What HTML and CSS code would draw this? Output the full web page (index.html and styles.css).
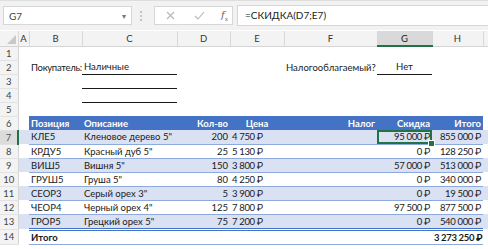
FILE: index.html
```html
<!DOCTYPE html>
<html lang="ru">
<head>
    <meta charset="UTF-8">
    <title>Скидка</title>
    <link rel="stylesheet" href="styles.css">
</head>
<body>
    <!-- Formula bar -->
    <div class="formula-bar">
        <div class="name-box">G7<span class="name-arrow">&#9662;</span></div>
        <div class="grip"></div>
        <div class="fx-buttons">
            <svg width="9" height="9" viewBox="0 0 9 9"><path d="M1 1L8 8M8 1L1 8" stroke="#b5b5b5" stroke-width="1.1" fill="none"/></svg>
            <svg width="11" height="9" viewBox="0 0 11 9"><path d="M1 5L4 8L10 1" stroke="#b5b5b5" stroke-width="1.1" fill="none"/></svg>
            <span class="fx">f<sub>x</sub></span>
        </div>
        <div class="formula-input">=СКИДКА(D7;E7)</div>
    </div>

    <!-- Sheet -->
    <table class="sheet">
        <colgroup>
            <col class="c-hdr"><col class="c-a"><col class="c-b"><col class="c-c"><col class="c-d">
            <col class="c-e"><col class="c-f"><col class="c-g"><col class="c-h"><col class="c-rest">
        </colgroup>
        <tr class="col-heads">
            <th class="corner"><span class="corner-tri"></span></th>
            <th>A</th><th>B</th><th>C</th><th>D</th><th>E</th><th>F</th><th class="sel">G</th><th>H</th><th></th>
        </tr>
        <tr><th class="rn">1</th><td colspan="9"></td></tr>
        <tr>
            <th class="rn">2</th><td></td>
            <td class="tight">Покупатель:</td>
            <td class="line">Наличные</td>
            <td></td><td></td>
            <td class="right">Налогооблагаемый?</td>
            <td class="line center">Нет</td>
            <td></td><td class="blank"></td>
        </tr>
        <tr><th class="rn">3</th><td></td><td></td><td class="line"></td><td colspan="6"></td></tr>
        <tr><th class="rn">4</th><td></td><td></td><td class="line"></td><td colspan="6"></td></tr>
        <tr><th class="rn">5</th><td colspan="9"></td></tr>
        <tr class="t-head">
            <th class="rn">6</th><td class="blank"></td>
            <td>Позиция</td>
            <td>Описание</td>
            <td class="right">Кол-во</td>
            <td class="center">Цена</td>
            <td class="right">Налог</td>
            <td class="right">Скидка</td>
            <td class="right">Итого</td>
            <td class="blank"></td>
        </tr>
        <tr class="t-row band">
            <th class="rn sel">7</th><td class="blank"></td>
            <td>КЛЕ5</td><td>Кленовое дерево 5"</td><td class="right">200</td>
            <td class="num">4 750 ₽</td><td></td><td class="right num active">95 000 ₽</td><td class="right num">855 000 ₽</td>
            <td class="blank"></td>
        </tr>
        <tr class="t-row">
            <th class="rn">8</th><td class="blank"></td>
            <td>КРДУ5</td><td>Красный дуб 5"</td><td class="right">25</td>
            <td class="num">5 130 ₽</td><td></td><td class="right num">0 ₽</td><td class="right num">128 250 ₽</td>
            <td class="blank"></td>
        </tr>
        <tr class="t-row band">
            <th class="rn">9</th><td class="blank"></td>
            <td>ВИШ5</td><td>Вишня 5"</td><td class="right">150</td>
            <td class="num">3 800 ₽</td><td></td><td class="right num">57 000 ₽</td><td class="right num">513 000 ₽</td>
            <td class="blank"></td>
        </tr>
        <tr class="t-row">
            <th class="rn">10</th><td class="blank"></td>
            <td>ГРУШ5</td><td>Груша 5"</td><td class="right">80</td>
            <td class="num">4 250 ₽</td><td></td><td class="right num">0 ₽</td><td class="right num">340 000 ₽</td>
            <td class="blank"></td>
        </tr>
        <tr class="t-row band">
            <th class="rn">11</th><td class="blank"></td>
            <td>СЕОР3</td><td>Серый орех 3"</td><td class="right">5</td>
            <td class="num">3 900 ₽</td><td></td><td class="right num">0 ₽</td><td class="right num">19 500 ₽</td>
            <td class="blank"></td>
        </tr>
        <tr class="t-row">
            <th class="rn">12</th><td class="blank"></td>
            <td>ЧЕОР4</td><td>Черный орех 4"</td><td class="right">125</td>
            <td class="num">7 800 ₽</td><td></td><td class="right num">97 500 ₽</td><td class="right num">877 500 ₽</td>
            <td class="blank"></td>
        </tr>
        <tr class="t-row band">
            <th class="rn">13</th><td class="blank"></td>
            <td>ГРОР5</td><td>Грецкий орех 5"</td><td class="right">75</td>
            <td class="num">7 200 ₽</td><td></td><td class="right num">0 ₽</td><td class="right num">540 000 ₽</td>
            <td class="blank"></td>
        </tr>
        <tr class="t-total">
            <th class="rn">14</th><td class="blank"></td>
            <td>Итого</td><td></td><td></td><td></td><td></td><td></td><td class="right num">3 273 250 ₽</td>
            <td class="blank"></td>
        </tr>
    </table>
</body>
</html>
```

FILE: styles.css
```css
body {
    margin: 0;
    font-family: Lato, Roboto, "DejaVu Sans", sans-serif;
    font-size: 9.5px;
    color: #1a1a1a;
    background: #fff;
    overflow: hidden;
}

/* formula bar */
.formula-bar {
    display: flex;
    align-items: center;
    height: 30px;
    padding: 0 0 0 3px;
    background: #f2f2f2;
    border-top: 1px solid #dedede;
    box-sizing: border-box;
}
.name-box {
    position: relative;
    width: 129px;
    height: 19px;
    line-height: 19px;
    padding-left: 5px;
    box-sizing: border-box;
    background: #fff;
    border: 1px solid #d6d6d6;
    color: #444;
    font-size: 10px;
}
.name-arrow {
    position: absolute;
    right: 5px;
    top: 0;
    font-size: 8px;
    color: #777;
}
.grip {
    width: 2px;
    height: 10px;
    margin: 0 10px 0 8px;
    border-left: 2px dotted #c4c4c4;
}
.fx-buttons {
    display: flex;
    align-items: center;
    gap: 19px;
    width: 79px;
    height: 19px;
    padding-left: 11px;
    box-sizing: border-box;
    background: #fff;
    border: 1px solid #d6d6d6;
}
.fx {
    font-family: "DejaVu Serif", serif;
    font-style: italic;
    font-size: 10px;
    color: #666;
    margin-left: -3px;
}
.fx sub {
    font-size: 6px;
}
.formula-input {
    flex: 1;
    height: 19px;
    line-height: 19px;
    margin-left: 4px;
    padding-left: 7px;
    background: #fff;
    border: 1px solid #d6d6d6;
    border-right: none;
    color: #222;
    font-size: 10px;
}

/* sheet grid */
.sheet {
    table-layout: fixed;
    border-collapse: collapse;
    width: 488px;
    margin-top: 1px;
}
.c-hdr { width: 18px; }
.c-a { width: 11px; }
.c-b { width: 53px; }
.c-c { width: 95px; }
.c-d { width: 53px; }
.c-e { width: 54px; }
.c-f { width: 93px; }
.c-g { width: 55px; }
.c-h { width: 51px; }
.c-rest { width: 5px; }

.sheet tr {
    height: 14px;
}
.sheet td {
    padding: 0 2px;
    white-space: nowrap;
    overflow: visible;
    line-height: 13px;
}
.sheet td.blank {
    padding: 0;
}
.sheet td.num {
    letter-spacing: -0.35px;
}
.sheet td.tight {
    letter-spacing: -0.3px;
}
.col-heads th {
    height: 14px;
    padding: 0;
    background: #f3f3f3;
    color: #333;
    font-weight: normal;
    font-size: 9.5px;
    border-bottom: 1px solid #d4d4d4;
    border-right: 1px solid #d8d8d8;
}
.col-heads th.sel {
    background: #d9d9d9;
    border-bottom: 2px solid #217346;
    color: #222;
}
.corner {
    position: relative;
}
.corner-tri {
    position: absolute;
    right: 2px;
    bottom: 2px;
    width: 0;
    height: 0;
    border-left: 9px solid transparent;
    border-bottom: 9px solid #c8c8c8;
}
.rn {
    padding: 0;
    background: #f3f3f3;
    color: #444;
    font-weight: normal;
    font-size: 9.5px;
    text-align: center;
    border-right: 1px solid #d4d4d4;
    border-bottom: 1px solid #e2e2e2;
}
.rn.sel {
    background: #dcdcdc;
    border-right: 2px solid #217346;
    color: #555;
}

.right { text-align: right; }
.center { text-align: center; }
.line {
    border-bottom: 1px solid #1a1a1a;
}

/* table block */
.t-head td {
    background: #4472c4;
    color: #fff;
    font-weight: bold;
}
.t-head td.blank,
.t-row td.blank,
.t-total td.blank {
    background: #fff;
    border: none;
}
.t-row td {
    border-bottom: 1px solid #8ea9db;
}
.t-row.band td {
    background: #d9e1f2;
}
.t-total {
    height: 17px;
}
.t-total td {
    border-top: 3px double #4472c4;
    font-weight: bold;
    border-bottom: 1px solid #8ea9db;
}

/* selected cell */
.active {
    position: relative;
    outline: 2px solid #217346;
    outline-offset: -2px;
}
.active::after {
    content: "";
    position: absolute;
    right: -3px;
    bottom: -3px;
    width: 5px;
    height: 5px;
    background: #217346;
    border: 1px solid #fff;
}
```
